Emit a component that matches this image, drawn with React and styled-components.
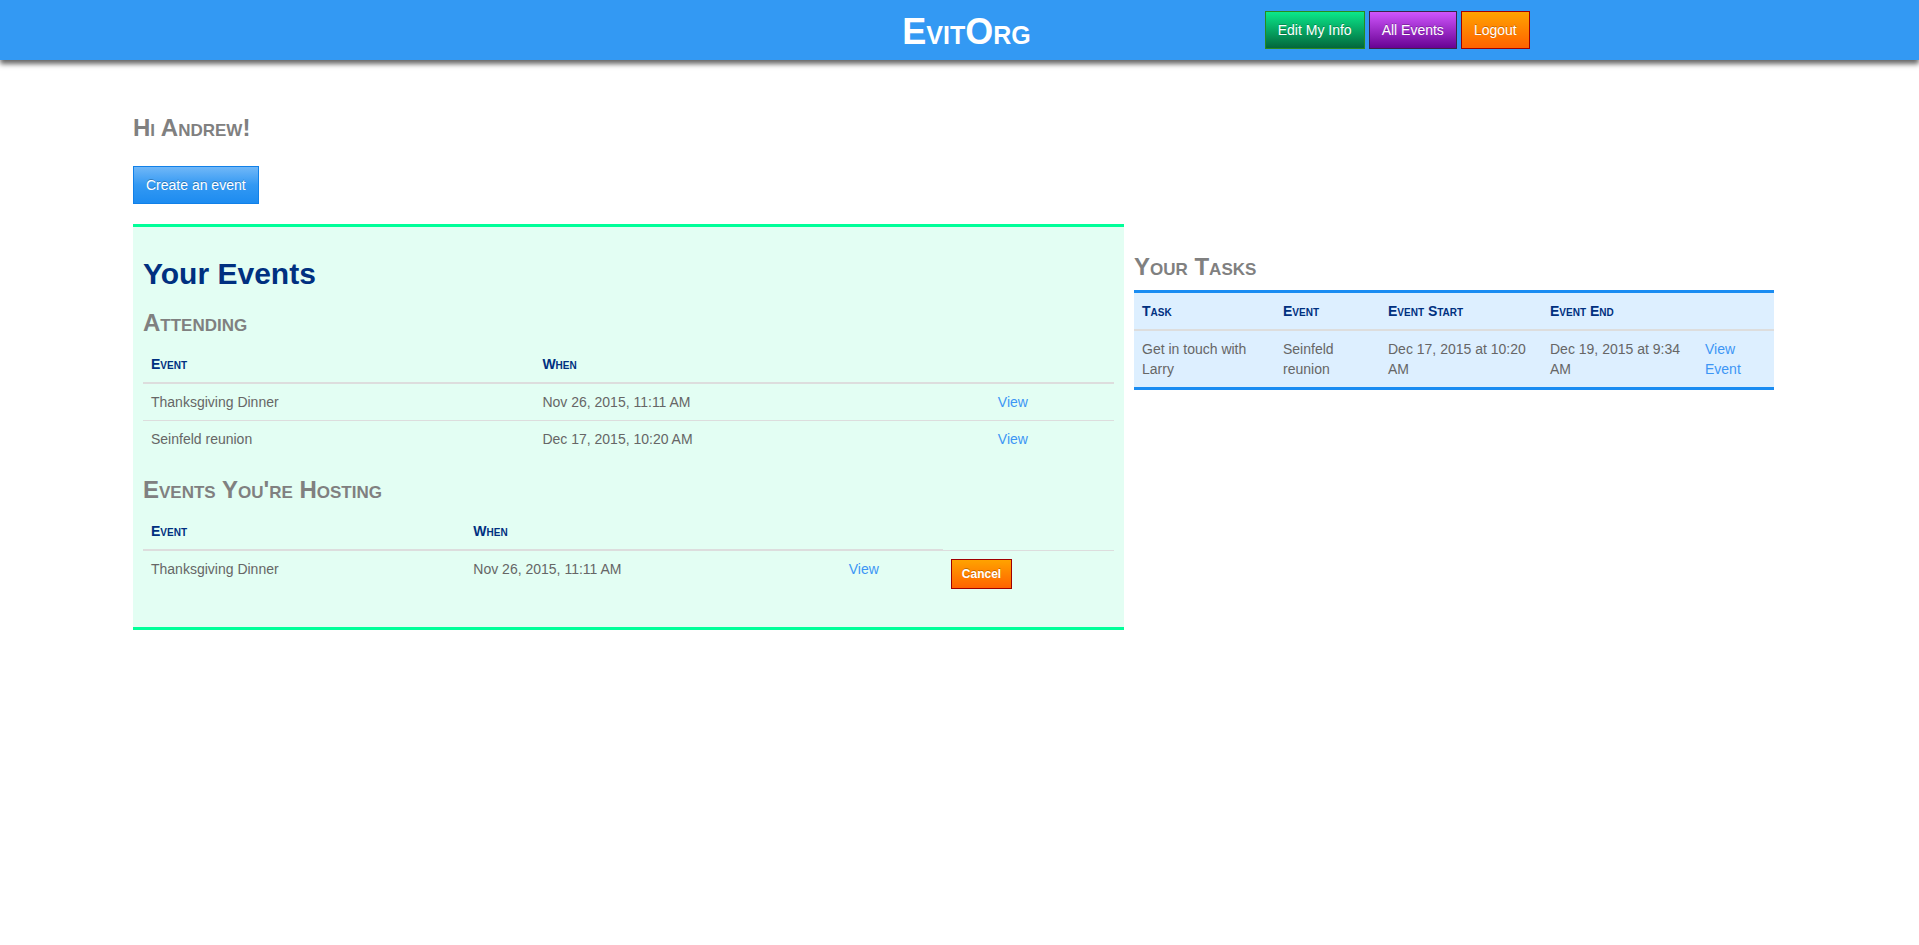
import React from "react";
import styled, { createGlobalStyle, css } from "styled-components";

const GlobalStyle = createGlobalStyle`
  *, *::before, *::after { box-sizing: border-box; }
  body {
    margin: 0;
    background: #fff;
    color: #666;
    font: 14px/20px "Liberation Sans", Arial, Helvetica, sans-serif;
  }
`;

const tones = {
  green: css`
    background: linear-gradient(#0bec8c, #02633a) border-box;
    border-color: #2a8a1c;
  `,
  purple: css`
    background: linear-gradient(#d258ff, #650090) border-box;
    border-color: #3b2448;
  `,
  orange: css`
    background: linear-gradient(#ffa500, #ff6000) border-box;
    border-color: #a00000;
  `,
  blue: css`
    background: linear-gradient(#74b9f8, #3399f3 50%, #1c8bf0) border-box;
    border-color: #1180e8;
  `,
};

const Button = styled.button`
  padding: ${(p) => (p.$small ? "5px 10px" : "8px 12px")};
  border: 1px solid;
  color: #fff;
  font-family: inherit;
  font-size: ${(p) => (p.$small ? "12px" : "14px")};
  font-weight: ${(p) => (p.$small ? "bold" : "normal")};
  line-height: ${(p) => (p.$small ? "18px" : "20px")};
  text-shadow: 0 -1px 0 rgba(0, 0, 0, 0.25);
  cursor: pointer;
  ${(p) => tones[p.$tone]}
`;

const Header = styled.header`
  display: grid;
  grid-template-columns: 1fr auto 1fr;
  align-items: center;
  height: 60px;
  padding-left: 14px;
  background: #3399f3;
  box-shadow: 0 4px 5px #666;
`;

const Brand = styled.h1`
  grid-column: 2;
  margin: 0;
  padding-top: 4px;
  color: #fff;
  font-size: 36px;
  line-height: 40px;
  font-variant: small-caps;
`;

const Nav = styled.nav`
  display: flex;
  gap: 4px;
  padding-left: 234px;
  white-space: nowrap;
`;

const Main = styled.main`
  padding: 55px 145px 20px 133px;
`;

const Heading = styled.h3`
  margin: 20px 0 10px;
  color: #808080;
  font-size: 24px;
  line-height: 26px;
  font-variant: small-caps;
`;

const Greeting = styled(Heading)`
  margin: 0 0 25px;
`;

const Columns = styled.div`
  display: grid;
  grid-template-columns: 991fr 640fr;
  gap: 10px;
  align-items: start;
  margin-top: 20px;
`;

const EventsPanel = styled.section`
  padding: 10px;
  border: solid #00ff99;
  border-width: 3px 0;
  background: #e3fef3;
`;

const PanelTitle = styled.h2`
  margin: 20px 0;
  color: #003080;
  font-size: 30px;
  line-height: 33px;
`;

const TasksPanel = styled.section`
  padding-top: 10px;
`;

const TableFrame = styled.div`
  border: solid #1a8cf2;
  border-width: 3px 0;
  background: #ddefff;
`;

const Table = styled.table`
  width: 100%;
  table-layout: fixed;
  margin-bottom: ${(p) => (p.$flush ? "0" : "20px")};
  border-spacing: 0;
  text-align: left;

  th, td {
    padding: 8px;
    vertical-align: top;
  }
  th {
    border-bottom: 2px solid #ddd;
    color: #003080;
    font-variant: small-caps;
  }
  tbody tr + tr td {
    border-top: 1px solid #ddd;
  }
  thead td {
    padding: 0;
    border-bottom: 1px solid #ddd;
    vertical-align: bottom;
  }
`;

const Col = styled.col`
  width: ${(p) => p.$width}px;
`;

const Link = styled.a`
  color: #3d96f5;
  text-decoration: none;
`;

const Cols = ({ widths }) => (
  <colgroup>
    {widths.map((width) => (
      <Col key={width} $width={width} />
    ))}
  </colgroup>
);

const attending = [
  ["Thanksgiving Dinner", "Nov 26, 2015, 11:11 AM"],
  ["Seinfeld reunion", "Dec 17, 2015, 10:20 AM"],
];

export default function App() {
  return (
    <>
      <GlobalStyle />
      <Header>
        <Brand>EvitOrg</Brand>
        <Nav>
          <Button $tone="green">Edit My Info</Button>
          <Button $tone="purple">All Events</Button>
          <Button $tone="orange">Logout</Button>
        </Nav>
      </Header>
      <Main>
        <Greeting>Hi Andrew!</Greeting>
        <Button $tone="blue">Create an event</Button>
        <Columns>
          <EventsPanel>
            <PanelTitle>Your Events</PanelTitle>
            <Heading>Attending</Heading>
            <Table>
              <Cols widths={[391, 455, 124]} />
              <thead>
                <tr>
                  <th>Event</th>
                  <th>When</th>
                  <th />
                </tr>
              </thead>
              <tbody>
                {attending.map(([name, when]) => (
                  <tr key={name}>
                    <td>{name}</td>
                    <td>{when}</td>
                    <td><Link href="#">View</Link></td>
                  </tr>
                ))}
              </tbody>
            </Table>
            <Heading>Events You're Hosting</Heading>
            <Table>
              <Cols widths={[322, 375, 102, 171]} />
              <thead>
                <tr>
                  <th>Event</th>
                  <th>When</th>
                  <th />
                  <td />
                </tr>
              </thead>
              <tbody>
                <tr>
                  <td>Thanksgiving Dinner</td>
                  <td>Nov 26, 2015, 11:11 AM</td>
                  <td><Link href="#">View</Link></td>
                  <td><Button $small $tone="orange">Cancel</Button></td>
                </tr>
              </tbody>
            </Table>
          </EventsPanel>
          <TasksPanel>
            <Heading>Your Tasks</Heading>
            <TableFrame>
              <Table $flush>
                <Cols widths={[141, 105, 162, 155, 77]} />
                <thead>
                  <tr>
                    <th>Task</th>
                    <th>Event</th>
                    <th>Event Start</th>
                    <th>Event End</th>
                    <th />
                  </tr>
                </thead>
                <tbody>
                  <tr>
                    <td>Get in touch with Larry</td>
                    <td>Seinfeld reunion</td>
                    <td>Dec 17, 2015 at 10:20 AM</td>
                    <td>Dec 19, 2015 at 9:34 AM</td>
                    <td><Link href="#">View Event</Link></td>
                  </tr>
                </tbody>
              </Table>
            </TableFrame>
          </TasksPanel>
        </Columns>
      </Main>
    </>
  );
}
